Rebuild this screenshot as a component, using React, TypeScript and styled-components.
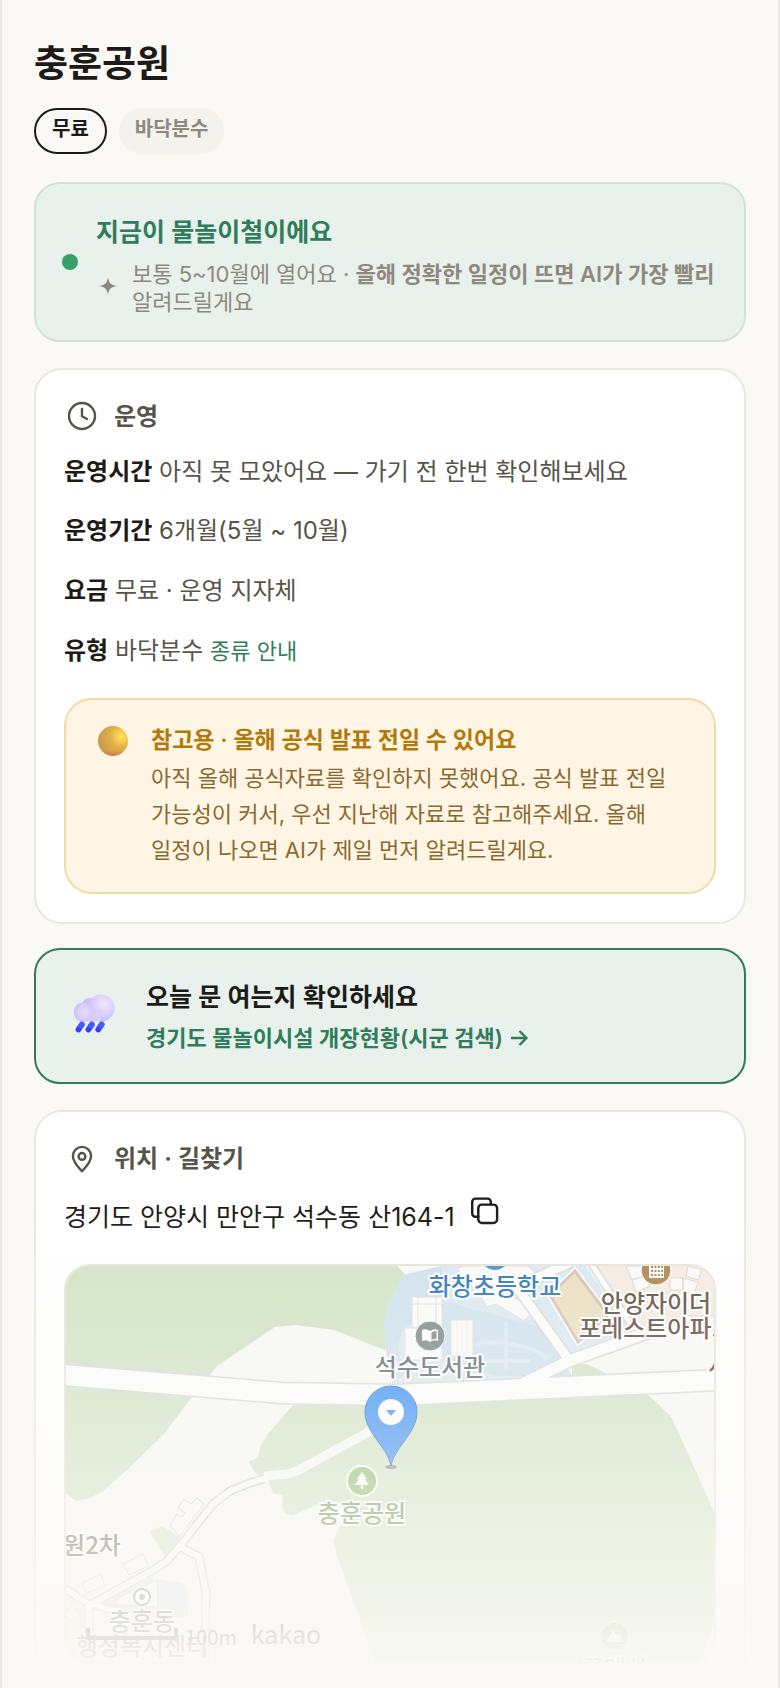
import { styled, createGlobalStyle } from "styled-components";

const GlobalStyle = createGlobalStyle`
  * {
    box-sizing: border-box;
  }
  body {
    margin: 0;
    background: #faf9f5;
    color: #1c1b18;
    font-family: Inter, "Noto Sans CJK KR", sans-serif;
    font-size: 24px;
    word-break: keep-all;
  }
  h1, h2, h3, p {
    margin: 0;
  }
`;

const Page = styled.main`
  position: relative;
  min-height: 100vh;
  padding: 38px 32px 0;
  border-left: 2px solid #e8e7e0;
  border-right: 2px solid #e8e7e0;
  overflow: hidden;
`;

const Title = styled.h1`
  font-size: 37px;
  font-weight: 700;
  line-height: 52px;
`;

const Chips = styled.div`
  display: flex;
  gap: 12px;
  margin: 18px 0 28px;
`;

const Chip = styled.span<{ $outlined?: boolean }>`
  height: 46px;
  padding: 0 16px;
  border-radius: 23px;
  border: ${({ $outlined }) => ($outlined ? "2px solid #1c1b18" : "0 solid transparent")};
  background: ${({ $outlined }) => ($outlined ? "transparent" : "#f3f2ed")};
  color: ${({ $outlined }) => ($outlined ? "#1c1b18" : "#8f897d")};
  font-size: 20px;
  font-weight: 600;
  line-height: ${({ $outlined }) => ($outlined ? "38px" : "42px")};
`;

const SeasonBanner = styled.section`
  display: flex;
  align-items: center;
  gap: 18px;
  padding: 30px 26px 24px;
  border: 2px solid #cfe4d8;
  border-radius: 26px;
  background: #e8f1ec;
`;

const Dot = styled.span`
  flex: none;
  width: 16px;
  height: 16px;
  margin-bottom: 6px;
  border-radius: 50%;
  background: #36a269;
`;

const SeasonTitle = styled.h2`
  font-size: 25px;
  font-weight: 600;
  line-height: 36px;
  color: #2f7d5b;
`;

const SeasonNote = styled.p`
  display: flex;
  align-items: center;
  gap: 12px;
  margin-top: 10px;
  font-size: 22px;
  line-height: 28px;
  color: #8f897d;
  b {
    font-weight: 600;
  }
  svg {
    flex: none;
    margin-bottom: 4px;
  }
`;

const Card = styled.section`
  margin-top: 26px;
  padding: 28px;
  border: 2px solid #e8e7e0;
  border-radius: 28px;
  background: #fff;
`;

const OpenCard = styled(Card)`
  padding-bottom: 24px;
  border-bottom: 0;
  border-radius: 28px 28px 0 0;
`;

const CardTitle = styled.h2`
  display: flex;
  align-items: center;
  gap: 14px;
  height: 36px;
  font-size: 24px;
  font-weight: 600;
  color: #57544b;
  span {
    padding-bottom: 4px;
  }
`;

const Facts = styled.div`
  padding: 9px 0 17px;
`;

const Fact = styled.p`
  line-height: 60px;
  color: #57544b;
  &:first-child {
    line-height: 58px;
  }
  b {
    font-weight: 600;
    color: #1c1b18;
  }
  a {
    font-size: 22px;
    color: #2f7d5b;
    text-decoration: none;
  }
`;

const Notice = styled.aside`
  display: flex;
  gap: 22px;
  padding: 22px 28px 24px 31px;
  border: 2px solid #f0dba6;
  border-radius: 28px;
  background: #fff5e4;
  svg {
    flex: none;
    margin-top: 3px;
  }
`;

const NoticeTitle = styled.h3`
  font-size: 23px;
  font-weight: 600;
  line-height: 36px;
  color: #b27a0b;
`;

const NoticeText = styled.p`
  margin-top: 2px;
  font-size: 22px;
  line-height: 36px;
  color: #8a6a30;
`;

const CheckLink = styled.a`
  display: flex;
  align-items: center;
  gap: 30px;
  margin-top: 24px;
  padding: 26px 30px 24px 36px;
  border: 2px solid #2f7d5b;
  border-radius: 26px;
  background: #e8f1ec;
  color: #1c1b18;
  text-decoration: none;
`;

const CheckTitle = styled.h2`
  font-size: 25px;
  font-weight: 600;
  line-height: 42px;
`;

const CheckSub = styled.p`
  display: flex;
  align-items: center;
  gap: 6px;
  font-size: 22px;
  font-weight: 600;
  line-height: 40px;
  color: #2f7d5b;
`;

const Address = styled.div`
  display: flex;
  align-items: center;
  gap: 15px;
  height: 42px;
  margin: 18px 0 28px;
  font-size: 25px;
`;

const CopyButton = styled.button`
  all: unset;
  display: flex;
  padding-bottom: 8px;
  cursor: pointer;
`;

const MapBox = styled.div`
  height: 400px;
  border: 2px solid #e8e3da;
  border-radius: 26px;
  overflow: hidden;
  background: #f8f8f6;
  svg {
    display: block;
    width: 100%;
    height: 100%;
  }
  text {
    font-family: "Noto Sans CJK KR", sans-serif;
    font-size: 24px;
    font-weight: 500;
    text-anchor: middle;
    stroke: #fff;
    stroke-width: 4px;
    stroke-linejoin: round;
    paint-order: stroke;
  }
`;

const Fade = styled.div`
  position: absolute;
  inset: auto 0 0 0;
  height: 480px;
  pointer-events: none;
  background: linear-gradient(
    to bottom,
    rgba(250, 249, 245, 0) 0%,
    rgba(250, 249, 245, 0.35) 42%,
    rgba(250, 249, 245, 0.65) 70%,
    rgba(250, 249, 245, 0.9) 90%,
    #faf9f5 100%
  );
`;

const SparkleIcon = () => (
  <svg width="24" height="24" viewBox="0 0 24 24" fill="#8f897d" aria-hidden="true">
    <path d="M12 3.500C13.200 9.200 14.800 10.800 20.500 12C14.800 13.200 13.200 14.800 12 20.500C10.800 14.800 9.200 13.200 3.500 12C9.200 10.800 10.800 9.200 12 3.500Z" />
  </svg>
);

const ClockIcon = () => (
  <svg width="36" height="36" viewBox="0 0 36 36" fill="none" stroke="#57544b" strokeWidth="2.4" strokeLinecap="round" strokeLinejoin="round" aria-hidden="true">
    <circle cx="18" cy="18" r="13" />
    <path d="M18 11v7.3l5 2.7" />
  </svg>
);

const PlaceIcon = () => (
  <svg width="36" height="36" viewBox="0 0 36 36" fill="none" stroke="#57544b" strokeWidth="2.4" strokeLinejoin="round" aria-hidden="true">
    <path d="M18 31.2C15.8 28.8 8.9 22.2 8.9 16A9.1 9.1 0 0 1 27.1 16C27.1 22.2 20.2 28.8 18 31.2Z" />
    <circle cx="18" cy="16.4" r="3.4" />
  </svg>
);

const CopyIcon = () => (
  <svg width="30" height="30" viewBox="0 0 30 30" fill="none" stroke="#1c1b18" strokeWidth="2.4" strokeLinecap="round" strokeLinejoin="round" aria-hidden="true">
    <rect x="8.3" y="8.6" width="18.8" height="18.4" rx="3.6" />
    <path d="M8.3 20.8H5.6a3.4 3.4 0 0 1-3.4-3.4V6a3.4 3.4 0 0 1 3.4-3.4h11.8A3.4 3.4 0 0 1 20.8 6v2.6" />
  </svg>
);

const ArrowIcon = () => (
  <svg width="20" height="20" viewBox="0 0 20 20" fill="none" stroke="#2f7d5b" strokeWidth="2.4" aria-hidden="true">
    <path d="M2 10h15M10.5 3l7 7-7 7" />
  </svg>
);

const BallIcon = () => (
  <svg width="32" height="32" viewBox="0 0 32 32" aria-hidden="true">
    <defs>
      <radialGradient id="ball" cx="0.78" cy="0.35" r="0.75">
        <stop offset="0" stopColor="#ffe45e" />
        <stop offset="0.5" stopColor="#e3b143" />
        <stop offset="1" stopColor="#c99a4c" />
      </radialGradient>
      <linearGradient id="ballShade" x1="0" y1="0" x2="0" y2="1">
        <stop offset="0.82" stopColor="#d06a60" stopOpacity="0" />
        <stop offset="1" stopColor="#d06a60" stopOpacity="0.8" />
      </linearGradient>
    </defs>
    <circle cx="16" cy="16" r="15" fill="url(#ball)" />
    <circle cx="16" cy="16" r="15" fill="url(#ballShade)" />
  </svg>
);

const RainIcon = () => (
  <svg width="44" height="48" viewBox="0 0 44 48" aria-hidden="true">
    <defs>
      <radialGradient id="puffBig" cx="0.6" cy="0.35" r="0.7">
        <stop offset="0" stopColor="#efe8ff" />
        <stop offset="0.6" stopColor="#d9cdfd" />
        <stop offset="1" stopColor="#c3b8f7" />
      </radialGradient>
      <radialGradient id="puffSmall" cx="0.55" cy="0.5" r="0.6">
        <stop offset="0" stopColor="#e6dcff" />
        <stop offset="0.6" stopColor="#d8cefd" />
        <stop offset="1" stopColor="#c3bbf6" />
      </radialGradient>
    </defs>
    <circle cx="17" cy="12" r="7" fill="#c9c3f8" />
    <circle cx="29" cy="15" r="13.6" fill="url(#puffBig)" />
    <rect x="12" y="16" width="17" height="12.6" fill="#d9cffc" />
    <circle cx="11.500" cy="19" r="9.800" fill="url(#puffSmall)" />
    <g strokeWidth="5.600" strokeLinecap="round">
      <path d="M9.800 31.500 6.400 36.600M19.800 31.500 16.400 36.600M29.600 31.500 26.200 36.600" stroke="#3d38fb" />
      <path d="M9.800 31.500 9 32.700M19.800 31.500 19 32.700M29.600 31.500 28.800 32.700" stroke="#3f5cff" />
    </g>
  </svg>
);

const ParkMap = () => (
  <svg viewBox="0 0 648 396" preserveAspectRatio="xMidYMin slice" role="img" aria-label="충훈공원 지도">
    <defs>
      <linearGradient id="pin" x1="0" y1="0" x2="0" y2="1">
        <stop offset="0" stopColor="#3a92f7" />
        <stop offset="1" stopColor="#4090f3" />
      </linearGradient>
    </defs>

    {/* parks */}
    <g fill="#d2e3c5">
      <path d="M0 0H331L340 9L319 84L268 64L229 59L209 61L151 100L126 131L98 168L61 204L37 225L24 232L11 235L6 232L0 227Z" />
      <path d="M228 138L201 169L195 179L192 191L183 196L189 207L202 214L207 227L217 229L216 241L219 248L227 249L262 234L285 243L275 259L267 274L271 289L309 396H631L637 388L648 357V246L606 152L592 138L581 128Z" />
      <path d="M506 99L521 98L549 112H506Z" />
      <path d="M84 266L96 260L114 271L99 291Z" />
    </g>

    {/* school grounds */}
    <path d="M337 9L376 0H520L566 66L460 113L327 118L320 84L318 62L321 42Z" fill="#dae8f1" />
    <path d="M337 9L376 0V40L338 62C330 75 330 95 340 105L327 118L320 84L318 62L321 42Z" fill="#cfe1ee" />
    <path d="M376 35L478 62L496 92L506 110H430L376 96Z" fill="#d0e2ee" />
    <g fill="none" stroke="#dde9f1" strokeWidth="4">
      <path d="M410 78C430 74 460 78 482 92M420 95H465M440 56V104" />
    </g>
    <g fill="#fafafa" stroke="#dedede" strokeWidth="1">
      <path d="M346 31H376V62H346ZM352 31V62M370 31V62M346 38H376" />
      <path d="M339 62H376V94H339Z" />
      <path d="M392 2L395 10L412 25L421 41L430 38L458 55L465 47L456 36L440 28L470 8L462 0H400Z" />
      <path d="M385 54H407V90H385Z" />
    </g>
    <path d="M391 54V90M396 54V90M401 54V90" stroke="#ececec" />

    {/* apartments */}
    <path d="M527 0H648V54L594 62L568 66Z" fill="#f4ebe0" />
    <g fill="#fbfaf8" stroke="#dcd6d0" strokeWidth="1">
      <path d="M560 0L566 14L578 10L576 0ZM566 14L570 26L584 20L578 10Z" />
      <path d="M604 12H617V24H604ZM617 12L632 16L628 28L617 24ZM622 0L636 4L632 14L620 10ZM568 26L560 40L572 46L580 30Z" />
      <path d="M618 50H648V64H618Z" />
    </g>

    {/* playground */}
    <path d="M509 5L542 49L512 76L484 29Z" fill="#ebdfc0" stroke="#fff" strokeWidth="6" />
    <path d="M509 5L542 49L512 76L484 29Z" fill="#ebdfc0" stroke="#d6c1b3" strokeWidth="3" />

    {/* streets */}
    <g fill="none" stroke="#d9d9d7" strokeLinejoin="round">
      <path d="M505 -4L462 16L453 24L503 94" strokeWidth="12" />
      <path d="M524 -4L566 60" strokeWidth="8" />
      <path d="M456 118L503 95L596 62" strokeWidth="14" />
      <path d="M-4 109L216 127L330 129L480 122L652 114" strokeWidth="23" />
    </g>
    <g fill="none" stroke="#fcfcfb" strokeLinejoin="round">
      <path d="M505 -4L462 16L453 24L503 94" strokeWidth="9" />
      <path d="M524 -4L566 60" strokeWidth="5" />
      <path d="M456 118L503 95L600 60" strokeWidth="11" />
      <path d="M-4 109L216 127L330 129L480 122L652 114" strokeWidth="20" />
      <path d="M308 163L233 204L222 208L198 210" strokeWidth="9" stroke="#f8f8f6" />
    </g>

    {/* village */}
    <path d="M91 313L116 317L123 326L122 351H80L34 337L84 312Z" fill="#dbe8f0" />
    <path d="M0 328L18 342V396H0Z" fill="#f4ebe0" />
    <g fill="#fafaf9" stroke="#cfcfcd" strokeWidth="1">
      <path d="M104 260L111 248L116 251L119 247L112 242L118 233L125 238L131 232L138 238L114 270Z" />
      <path d="M57 298L77 288L83 300L63 309ZM16 317L35 308L39 320L21 327Z" />
      <path d="M91 314L51 332V339L92 341ZM-1 348L6 340L13 348L5 355Z" />
    </g>
    <g fill="none" stroke="#cfcfcd" strokeWidth="9" strokeLinejoin="round">
      <path d="M198 213L184 217L164 225L147 238L114 280L101 295L84 306L24 339L6 327L-2 322" />
      <path d="M114 281L133 291L140 327L139 400M23 339V400M26 338L50 345" />
    </g>
    <g fill="none" stroke="#fcfcfb" strokeWidth="6" strokeLinejoin="round">
      <path d="M200 212L184 217L164 225L147 238L114 280L101 295L84 306L24 339L6 327L-2 322" />
      <path d="M114 281L133 291L140 327L139 400M23 339V400M26 338L50 345" />
    </g>

    {/* place markers */}
    <circle cx="429" cy="-10" r="14" fill="#4a8ecf" />
    <circle cx="590" cy="4" r="15" fill="#ab834a" stroke="#fff" />
    <path d="M583 -2H598V12H583Z" fill="#fff" />
    <path d="M585 1H597M585 5H597M585 9H597" stroke="#ab834a" strokeWidth="2" strokeDasharray="2 1.4" />
    <circle cx="364" cy="70" r="15" fill="#7c878a" stroke="#fff" />
    <path d="M356 64Q360 62 364 65Q368 62 372 64V75Q368 73 364 76Q360 73 356 75Z" fill="#fff" />
    <path d="M365.500 66.500Q368 64.500 370.500 65V73Q368 72 365.500 74Z" fill="#7c878a" />
    <circle cx="296" cy="215" r="15" fill="#8dbd6f" stroke="#fff" strokeWidth="2" />
    <path d="M296 206L301 213H299L303 219H297V223H295V219H289L293 213H291Z" fill="#fff" />
    <circle cx="76" cy="331" r="8" fill="#fff" stroke="#6e6e6e" strokeWidth="2" />
    <circle cx="76" cy="331" r="3" fill="#6e6e6e" />
    <circle cx="549" cy="370" r="14" fill="#9cc47d" stroke="#fff" />
    <path d="M540 376L547 364L551 370L553 367L559 376Z" fill="#fff" />

    <text x="429" y="29" fill="#2873b9">화창초등학교</text>
    <text x="590" y="46" fill="#5f4a3d">안양자이더</text>
    <text x="513" y="71" fill="#5f4a3d" style={{ textAnchor: "start" }}>포레스트아파...</text>
    <text x="364" y="110" fill="#5d696c">석수도서관</text>
    <text x="653" y="108" fill="#5f4a3d">서</text>
    <text x="296" y="256" fill="#6b9150">충훈공원</text>
    <text x="26" y="288" fill="#6b5446">원2차</text>
    <text x="76" y="364" fill="#555">충훈동</text>
    <text x="76" y="389" fill="#555">행정복지센터</text>
    <text x="549" y="411" fill="#5b8a3c">꾸메산</text>

    {/* selected place */}
    <ellipse cx="325" cy="201" rx="6" ry="2" fill="#555" opacity="0.6" />
    <path d="M325 200C321 180 299 167 299 146A26 26 0 0 1 351 146C351 167 329 180 325 200Z" fill="url(#pin)" stroke="#2f6cc4" />
    <circle cx="325" cy="146" r="13" fill="#fff" />
    <path d="M320 144H330L325 150Z" fill="#3a92f7" />

    {/* scale */}
    <path d="M22 362V372H110V362" fill="none" stroke="#333" strokeWidth="4" />
    <text x="145" y="379" fill="#333" style={{ fontSize: 20, fontWeight: 400, strokeWidth: 0 }}>100m</text>
    <text x="220" y="378" fill="#333" style={{ fontSize: 25, fontWeight: 400, strokeWidth: 0 }}>kakao</text>
  </svg>
);

export default function App() {
  return (
    <>
      <GlobalStyle />
      <Page>
        <Title>충훈공원</Title>
        <Chips>
          <Chip $outlined>무료</Chip>
          <Chip>바닥분수</Chip>
        </Chips>
        <SeasonBanner>
          <Dot />
          <div>
            <SeasonTitle>지금이 물놀이철이에요</SeasonTitle>
            <SeasonNote>
              <SparkleIcon />
              <span>
                보통 5~10월에 열어요 · <b>올해 정확한 일정이 뜨면 AI가 가장 빨리</b> 알려드릴게요
              </span>
            </SeasonNote>
          </div>
        </SeasonBanner>
        <Card>
          <CardTitle>
            <ClockIcon />
            <span>운영</span>
          </CardTitle>
          <Facts>
            <Fact>
              <b>운영시간</b> 아직 못 모았어요 — 가기 전 한번 확인해보세요
            </Fact>
            <Fact>
              <b>운영기간</b> 6개월(5월 ~ 10월)
            </Fact>
            <Fact>
              <b>요금</b> 무료 · 운영 지자체
            </Fact>
            <Fact>
              <b>유형</b> 바닥분수 <a href="#types">종류 안내</a>
            </Fact>
          </Facts>
          <Notice>
            <BallIcon />
            <div>
              <NoticeTitle>참고용 · 올해 공식 발표 전일 수 있어요</NoticeTitle>
              <NoticeText>
                아직 올해 공식자료를 확인하지 못했어요. 공식 발표 전일 가능성이 커서, 우선 지난해 자료로
                참고해주세요. 올해 일정이 나오면 AI가 제일 먼저 알려드릴게요.
              </NoticeText>
            </div>
          </Notice>
        </Card>
        <CheckLink href="#status">
          <RainIcon />
          <div>
            <CheckTitle>오늘 문 여는지 확인하세요</CheckTitle>
            <CheckSub>
              경기도 물놀이시설 개장현황(시군 검색)
              <ArrowIcon />
            </CheckSub>
          </div>
        </CheckLink>
        <OpenCard>
          <CardTitle>
            <PlaceIcon />
            <span>위치 · 길찾기</span>
          </CardTitle>
          <Address>
            <span>경기도 안양시 만안구 석수동 산164-1</span>
            <CopyButton type="button" aria-label="주소 복사">
              <CopyIcon />
            </CopyButton>
          </Address>
          <MapBox>
            <ParkMap />
          </MapBox>
        </OpenCard>
        <Fade />
      </Page>
    </>
  );
}
